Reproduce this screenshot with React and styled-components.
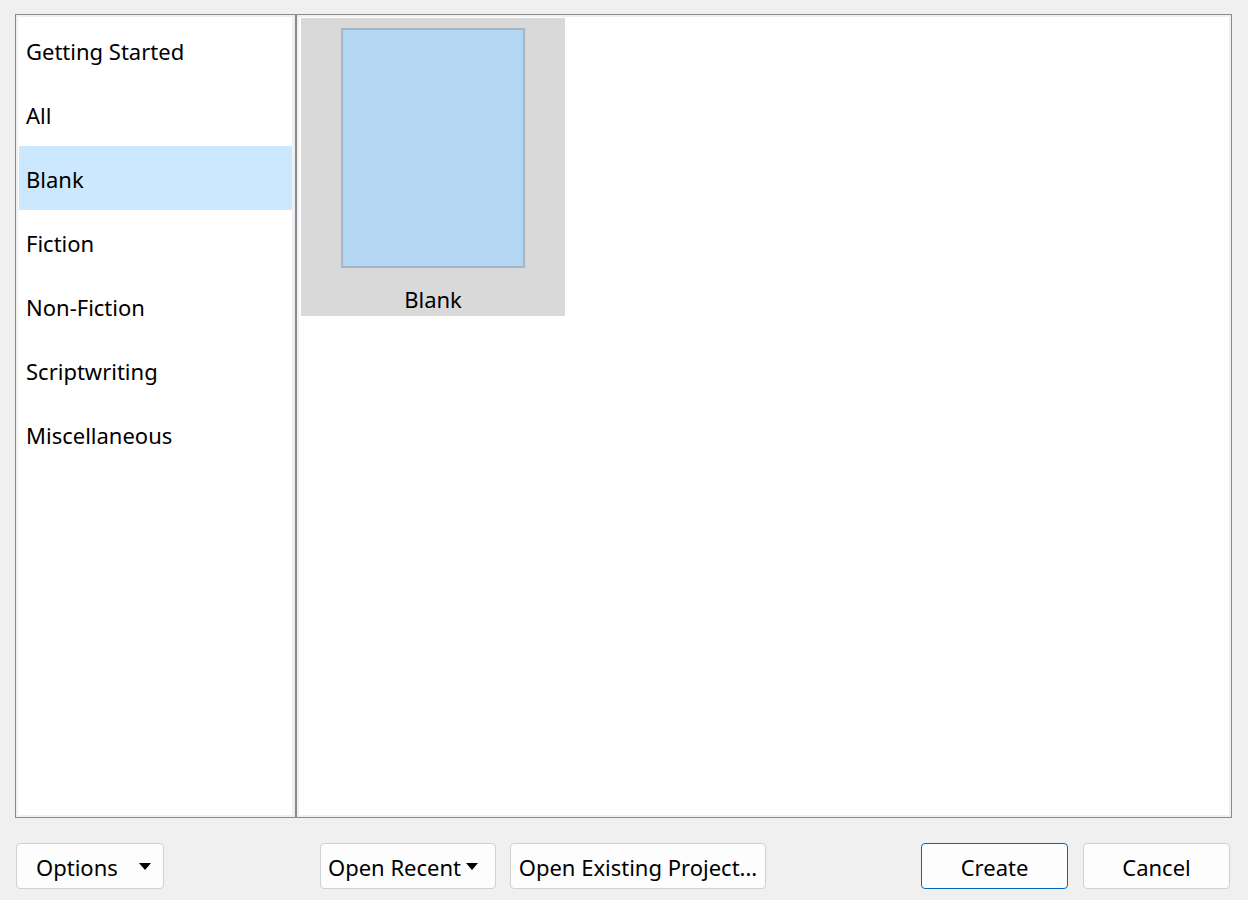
import React from "react";
import styled, { createGlobalStyle } from "styled-components";

const Global = createGlobalStyle`
  html, body { margin: 0; padding: 0; background: #f0f0f0; }
  body { font-family: "Noto Sans", "Open Sans", sans-serif; color: #000; }
`;

const Page = styled.div`
  width: 1248px;
  height: 900px;
  box-sizing: border-box;
  padding: 14px 16px 0 15px;
  display: flex;
  flex-direction: column;
  background: #f0f0f0;
`;

const Frame = styled.div`
  height: 804px;
  box-sizing: border-box;
  border: 1px solid #878b90;
  display: flex;
  background: #f0f0f0;
`;

const Sidebar = styled.div`
  width: 278px;
  box-sizing: border-box;
  border: 2px solid #f0f0f0;
  padding: 1px 0 0 1px;
  background: #fff;
  display: flex;
  flex-direction: column;
`;

const Item = styled.div`
  height: 64px;
  flex: none;
  box-sizing: border-box;
  display: flex;
  align-items: center;
  padding: 2px 0 0 7px;
  font-size: 22px;
  background: ${(p) => (p.$selected ? "#cce8ff" : "transparent")};
`;

const Splitter = styled.div`
  width: 2px;
  background: #878b90;
  margin-left: 1px;
`;

const Content = styled.div`
  flex: 1;
  box-sizing: border-box;
  border: 2px solid #f0f0f0;
  padding: 1px 0 0 2px;
  background: #fff;
  display: flex;
  align-items: flex-start;
`;

const Card = styled.div`
  width: 264px;
  height: 298px;
  box-sizing: border-box;
  background: #d9d9d9;
  padding-top: 10px;
  display: flex;
  flex-direction: column;
  align-items: center;
`;

const Preview = styled.div`
  width: 184px;
  height: 240px;
  box-sizing: border-box;
  border: 2px solid #a6b6c6;
  background: #b3d6f2;
`;

const CardLabel = styled.div`
  margin-top: 17px;
  height: 28px;
  line-height: 28px;
  font-size: 22px;
`;

const Bar = styled.div`
  margin-top: 25px;
  display: flex;
  align-items: center;
  padding: 0 2px 0 1px;
`;

const Button = styled.div`
  height: 46px;
  width: ${(p) => p.$w}px;
  box-sizing: border-box;
  border: 1px solid ${(p) => (p.$primary ? "#0067c0" : "#d0d0d0")};
  border-radius: 4px;
  background: #fdfdfd;
  display: flex;
  align-items: center;
  justify-content: ${(p) => p.$justify || "center"};
  padding: ${(p) => p.$pad || "0"};
  padding-top: 1px;
  gap: ${(p) => p.$gap || 0}px;
  font-size: 22px;
  margin-left: ${(p) => p.$ml || 0}px;
  flex: none;
`;

const Spacer = styled.div`
  flex: 1;
`;

const Arrow = styled.span`
  width: 0;
  height: 0;
  border-left: 6px solid transparent;
  border-right: 6px solid transparent;
  border-top: 7px solid #000;
  margin-top: -1px;
`;

const categories = [
  "Getting Started",
  "All",
  "Blank",
  "Fiction",
  "Non-Fiction",
  "Scriptwriting",
  "Miscellaneous",
];

export default function App() {
  return (
    <>
      <Global />
      <Page>
        <Frame>
          <Sidebar>
            {categories.map((c) => (
              <Item key={c} $selected={c === "Blank"}>
                {c}
              </Item>
            ))}
          </Sidebar>
          <Splitter />
          <Content>
            <Card>
              <Preview />
              <CardLabel>Blank</CardLabel>
            </Card>
          </Content>
        </Frame>
        <Bar>
          <Button $w={148} $justify="space-between" $pad="0 12px 0 19px">
            <span>Options</span>
            <Arrow />
          </Button>
          <Button $w={176} $ml={156} $justify="flex-start" $pad="0 0 0 7px" $gap={5}>
            <span>Open Recent</span>
            <Arrow />
          </Button>
          <Button $w={256} $ml={14}>
            Open Existing Project...
          </Button>
          <Spacer />
          <Button $w={147} $primary>
            Create
          </Button>
          <Button $w={147} $ml={15}>
            Cancel
          </Button>
        </Bar>
      </Page>
    </>
  );
}
